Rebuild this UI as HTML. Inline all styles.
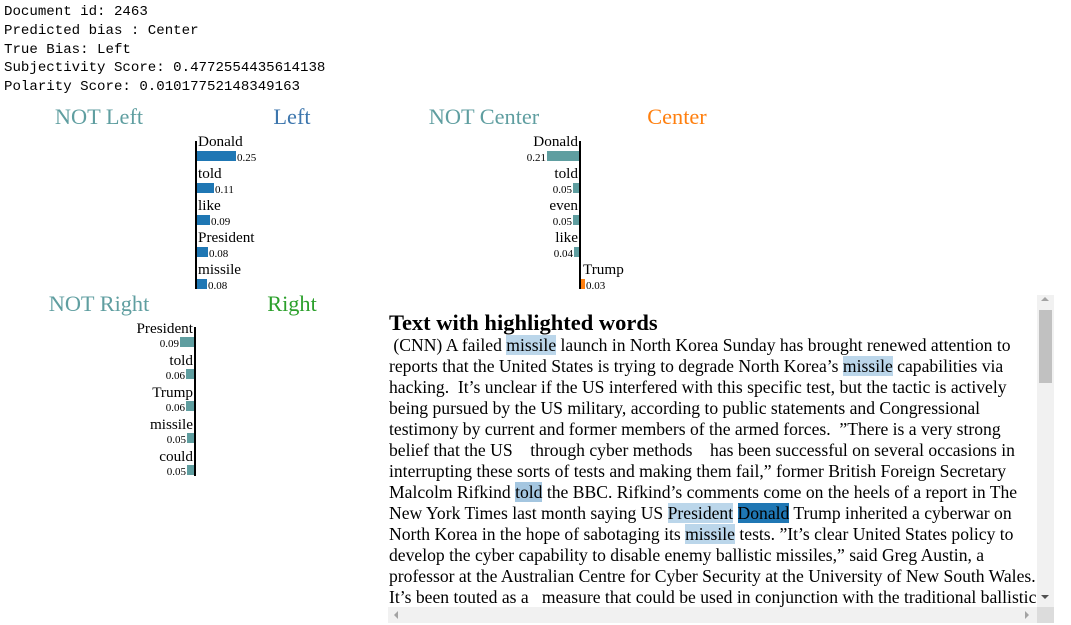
<!DOCTYPE html>
<html><head><meta charset="utf-8"><style>
body{margin:0;width:1071px;height:625px;background:#fff;position:relative;overflow:hidden;font-family:"Liberation Serif",serif}
.hdr{position:absolute;left:4px;top:3px;font:14.1px/18.75px "Liberation Mono",monospace;white-space:pre;color:#000}
.t{position:absolute;font-size:22.3px;white-space:nowrap;transform:translateX(-50%)}
.nc{color:#5f9ea0}
.ax{position:absolute;width:2px;background:#000}
.w{position:absolute;font-size:15.2px;line-height:16px;white-space:nowrap}
.v{position:absolute;font-size:11px;line-height:12px;white-space:nowrap}
.b{position:absolute;height:10px}
.bl{background:#1f77b4}.bt{background:#5f9ea0}.bo{background:#ff7f0e}
.r{text-align:right}
#box{position:absolute;left:388px;top:295px;width:666px;height:328px;background:#fff;overflow:hidden}
#txt{position:absolute;left:1px;top:16px;font-size:17.6px;line-height:21px;white-space:nowrap;color:#000}
h3{margin:0;font-size:22.5px;line-height:24px;font-weight:bold}
.hl{background:#bbd6ea}.hd{background:#1f77b4}
#vs{position:absolute;left:649px;top:0;width:17px;height:312px;background:#f1f1f1}
#th{position:absolute;left:2px;top:15px;width:13px;height:73px;background:#c1c1c1}
#hs{position:absolute;left:0;top:312px;width:649px;height:16px;background:#f1f1f1}
#cr{position:absolute;left:649px;top:312px;width:17px;height:16px;background:#dcdcdc}
.ar{position:absolute;width:0;height:0;border:4px solid transparent}
</style></head><body>
<div class="hdr">Document id: 2463
Predicted bias : Center
True Bias: Left
Subjectivity Score: 0.4772554435614138
Polarity Score: 0.01017752148349163</div>

<div class="t nc" style="left:99px;top:104px">NOT Left</div>
<div class="t" style="left:292px;top:104px;color:#3d76ad">Left</div>
<div class="t nc" style="left:484px;top:104px">NOT Center</div>
<div class="t" style="left:677px;top:104px;color:#ff7f0e">Center</div>
<div class="t nc" style="left:99px;top:291px">NOT Right</div>
<div class="t" style="left:292px;top:291px;color:#2ca02c">Right</div>

<div class="ax" style="left:195px;top:141px;height:148px"></div>
<div class="w" style="left:198px;top:134px">Donald</div><div class="b bl" style="left:197px;top:151px;width:39px"></div><div class="v" style="left:237px;top:152px">0.25</div>
<div class="w" style="left:198px;top:166px">told</div><div class="b bl" style="left:197px;top:183px;width:17px"></div><div class="v" style="left:215px;top:184px">0.11</div>
<div class="w" style="left:198px;top:198px">like</div><div class="b bl" style="left:197px;top:215px;width:13px"></div><div class="v" style="left:211px;top:216px">0.09</div>
<div class="w" style="left:198px;top:230px">President</div><div class="b bl" style="left:197px;top:247px;width:11px"></div><div class="v" style="left:209px;top:248px">0.08</div>
<div class="w" style="left:198px;top:262px">missile</div><div class="b bl" style="left:197px;top:279px;width:10px"></div><div class="v" style="left:208px;top:280px">0.08</div>

<div class="ax" style="left:579px;top:141px;height:148px"></div>
<div class="w r" style="right:493px;top:134px">Donald</div><div class="b bt" style="left:547px;top:151px;width:32px"></div><div class="v r" style="right:525px;top:152px">0.21</div>
<div class="w r" style="right:493px;top:166px">told</div><div class="b bt" style="left:573px;top:183px;width:6px"></div><div class="v r" style="right:499px;top:184px">0.05</div>
<div class="w r" style="right:493px;top:198px">even</div><div class="b bt" style="left:573px;top:215px;width:6px"></div><div class="v r" style="right:499px;top:216px">0.05</div>
<div class="w r" style="right:493px;top:230px">like</div><div class="b bt" style="left:574px;top:247px;width:5px"></div><div class="v r" style="right:498px;top:248px">0.04</div>
<div class="w" style="left:583px;top:262px">Trump</div><div class="b bo" style="left:581px;top:279px;width:4px"></div><div class="v" style="left:586px;top:280px">0.03</div>

<div class="ax" style="left:194px;top:327px;height:149px"></div>
<div class="w r" style="right:878px;top:321px">President</div><div class="b bt" style="left:180px;top:337px;width:14px"></div><div class="v r" style="right:892px;top:338px">0.09</div>
<div class="w r" style="right:878px;top:353px">told</div><div class="b bt" style="left:186px;top:369px;width:8px"></div><div class="v r" style="right:886px;top:370px">0.06</div>
<div class="w r" style="right:878px;top:385px">Trump</div><div class="b bt" style="left:186px;top:401px;width:8px"></div><div class="v r" style="right:886px;top:402px">0.06</div>
<div class="w r" style="right:878px;top:417px">missile</div><div class="b bt" style="left:187px;top:433px;width:7px"></div><div class="v r" style="right:885px;top:434px">0.05</div>
<div class="w r" style="right:878px;top:449px">could</div><div class="b bt" style="left:187px;top:465px;width:7px"></div><div class="v r" style="right:885px;top:466px">0.05</div>

<div id="box">
<div id="txt">
<h3>Text with highlighted words</h3>
&nbsp;(CNN) A failed <span class="hl">missile</span> launch in North Korea Sunday has brought renewed attention to<br>
reports that the United States is trying to degrade North Korea’s <span class="hl">missile</span> capabilities via<br>
hacking.&nbsp; It’s unclear if the US interfered with this specific test, but the tactic is actively<br>
being pursued by the US military, according to public statements and Congressional<br>
testimony by current and former members of the armed forces.&nbsp; ”There is a very strong<br>
belief that the US &nbsp;&nbsp; through cyber methods &nbsp;&nbsp; has been successful on several occasions in<br>
interrupting these sorts of tests and making them fail,” former British Foreign Secretary<br>
Malcolm Rifkind <span class="hl" style="background:#a4c6e0">told</span> the BBC. Rifkind’s comments come on the heels of a report in The<br>
New York Times last month saying US <span class="hl">President</span> <span class="hd">Donald</span> Trump inherited a cyberwar on<br>
North Korea in the hope of sabotaging its <span class="hl">missile</span> tests. ”It’s clear United States policy to<br>
develop the cyber capability to disable enemy ballistic missiles,” said Greg Austin, a<br>
professor at the Australian Centre for Cyber Security at the University of New South Wales.<br>
It’s been touted as a &nbsp; measure that could be used in conjunction with the traditional ballistic
</div>
<div id="vs"><div id="th"></div><div class="ar" style="left:4px;top:-2px;border-bottom-color:#a3a3a3"></div><div class="ar" style="left:4px;top:300px;border-top-color:#505050"></div></div>
<div id="hs"><div class="ar" style="left:2px;top:4px;border-right-color:#a3a3a3"></div><div class="ar" style="left:637px;top:4px;border-left-color:#a3a3a3"></div></div><div id="cr"></div>
</div>
</body></html>
